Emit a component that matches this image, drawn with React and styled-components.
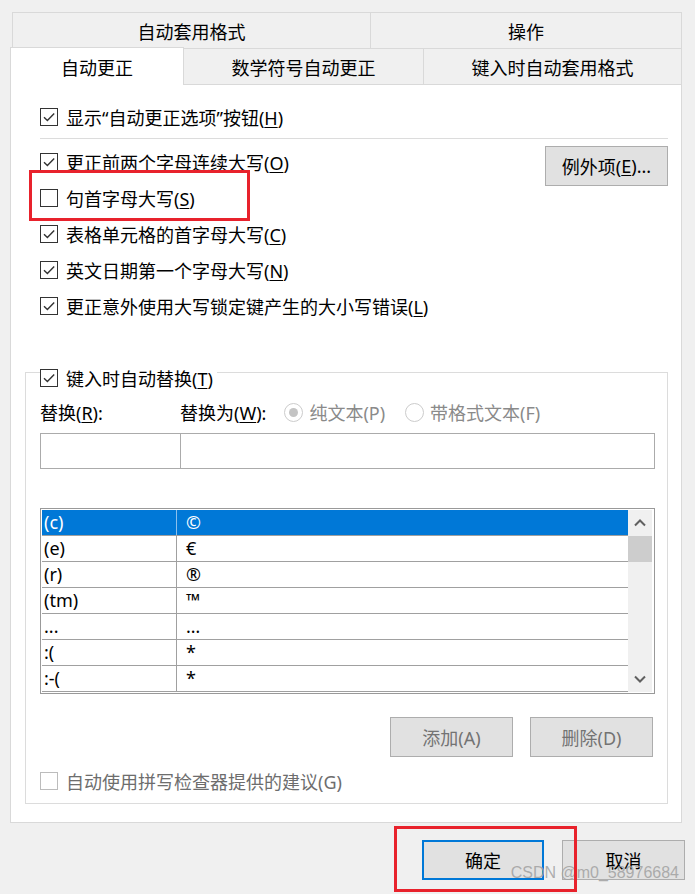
import React from 'react'
import styled, { createGlobalStyle } from 'styled-components'

const GlobalStyle = createGlobalStyle`
  html, body {
    margin: 0;
    padding: 0;
    background: #f0f0f0;
  }
  body {
    font-family: "Noto Sans", "Noto Sans CJK SC", sans-serif;
    font-size: 18px;
    color: #000;
  }
  * { box-sizing: border-box; }
`

const Page = styled.div`
  position: relative;
  width: 695px;
  height: 894px;
  overflow: hidden;
  padding: 12px 0 0 10px;
`

const Dialog = styled.div`
  width: 672px;
`

const TabRow = styled.div`
  display: flex;
  height: 36px;
  padding-left: ${p => p.$indent || 0}px;
`

const Tab = styled.div`
  position: relative;
  z-index: ${p => p.$active ? 2 : 0};
  width: ${p => p.$w}px;
  height: ${p => p.$active ? 38 : 36}px;
  margin-top: ${p => p.$active ? -1 : 0}px;
  background: ${p => p.$active ? '#fff' : '#f0f0f0'};
  border: 1px solid #d9d9d9;
  border-bottom: none;
  display: flex;
  align-items: center;
  justify-content: center;
  padding-top: 3px;
  line-height: 1;
  & + & { margin-left: -1px; }
`

const Panel = styled.div`
  position: relative;
  background: #fff;
  border: 1px solid #d9d9d9;
  height: 739px;
  padding: 14px 13px 0 14px;
`

const Section = styled.div`
  padding-left: 15px;
`

const OptionRow = styled.div`
  position: relative;
  display: flex;
  align-items: center;
  gap: 8px;
  height: ${p => p.$h || 36}px;
  margin-top: ${p => p.$mt || 0}px;
  color: ${p => p.$disabled ? '#6d6d6d' : '#000'};
  white-space: nowrap;
`

const Box = styled.span`
  flex: none;
  width: 18px;
  height: 18px;
  border: 1px solid ${p => p.$disabled ? '#bcbcbc' : '#333'};
  background: #fff;
  display: flex;
  align-items: center;
  justify-content: center;
`

const Mn = styled.span`
  text-decoration: underline;
  text-underline-offset: 2px;
  text-decoration-thickness: 1px;
`

const Divider = styled.div`
  height: 1px;
  background: #dcdcdc;
  margin: 3px 0 5px;
`

const OptionsBlock = styled.div`
  display: flex;
  justify-content: space-between;
  align-items: flex-start;
`

const Button = styled.div`
  position: relative;
  flex: none;
  width: ${p => p.$w || 123}px;
  height: 40px;
  margin-top: ${p => p.$mt || 0}px;
  background: #e1e1e1;
  border: ${p => p.$default ? '2px solid #0078d7' : '1px solid #adadad'};
  color: ${p => p.$disabled ? '#737373' : '#000'};
  display: flex;
  align-items: center;
  justify-content: center;
  white-space: nowrap;
`

const Highlight = styled.div`
  position: absolute;
  z-index: 3;
  left: ${p => p.$l}px;
  top: ${p => p.$t}px;
  width: ${p => p.$w}px;
  height: ${p => p.$h}px;
  border: 3px solid #e8222c;
  pointer-events: none;
`

const GroupBox = styled.div`
  margin-top: 48px;
  border: 1px solid #dcdcdc;
  padding: 0 12px 10px 14px;
`

const Legend = styled.div`
  display: flex;
  width: fit-content;
  align-items: center;
  gap: 8px;
  height: 24px;
  margin-top: -7px;
  padding-right: 4px;
  background: #fff;
  white-space: nowrap;
`

const LabelRow = styled.div`
  display: flex;
  align-items: center;
  height: 24px;
  margin-top: 10px;
  white-space: nowrap;
`

const FieldLabel = styled.div`
  width: ${p => p.$w ? `${p.$w}px` : 'auto'};
`

const RadioGroup = styled.div`
  display: flex;
  align-items: center;
  margin-left: 18px;
  color: #8a8a8a;
`

const RadioItem = styled.div`
  display: flex;
  align-items: center;
  gap: 6px;
  & + & { margin-left: 20px; }
`

const Radio = styled.span`
  width: 19px;
  height: 19px;
  border-radius: 50%;
  border: 1px solid #cccccc;
  background: #fff;
  display: flex;
  align-items: center;
  justify-content: center;
  &::after {
    content: '';
    width: 9px;
    height: 9px;
    border-radius: 50%;
    background: ${p => p.$on ? '#c4c4c4' : 'transparent'};
  }
`

const InputRow = styled.div`
  display: flex;
  height: 36px;
  margin-top: 9px;
`

const Input = styled.div`
  width: ${p => p.$w ? `${p.$w}px` : 'auto'};
  flex: ${p => p.$w ? 'none' : 1};
  border: 1px solid #ababab;
  background: #fff;
  & + & { margin-left: -1px; }
`

const List = styled.div`
  display: flex;
  height: 186px;
  margin-top: 39px;
  border: 1px solid #999;
  padding: 1px 2px 1px 1px;
  background: #fff;
`

const Rows = styled.div`
  flex: 1;
  overflow: hidden;
`

const Row = styled.div`
  display: flex;
  height: 26px;
  border-bottom: 1px solid #a0a0a0;
  background: ${p => p.$sel ? '#0078d7' : '#fff'};
  color: ${p => p.$sel ? '#fff' : '#000'};
  line-height: 25px;
`

const KeyCell = styled.div`
  width: 135px;
  padding-left: 2px;
  border-right: 1px solid ${p => p.$sel ? '#8cc0ec' : '#a0a0a0'};
`

const ValueCell = styled.div`
  flex: 1;
  padding-left: 9px;
`

const Scrollbar = styled.div`
  width: 24px;
  background: #f0f0f0;
  display: flex;
  flex-direction: column;
`

const ArrowButton = styled.div`
  height: 26px;
  display: flex;
  align-items: center;
  justify-content: center;
  margin-top: ${p => p.$push ? 'auto' : 0};
`

const Thumb = styled.div`
  height: 26px;
  background: #cdcdcd;
`

const ButtonRow = styled.div`
  display: flex;
  justify-content: flex-end;
  gap: 17px;
  margin-top: 23px;
  padding-right: 2px;
`

const Footer = styled.div`
  display: flex;
  justify-content: flex-end;
  gap: 18px;
  width: 675px;
  margin-top: 17px;
`

const Watermark = styled.div`
  position: absolute;
  right: 16px;
  top: 864px;
  font-family: "Liberation Sans", Arial, sans-serif;
  font-size: 16px;
  color: rgba(160, 160, 160, 0.85);
  white-space: nowrap;
`

const Check = ({ disabled, checked = true }) => (
  <Box $disabled={disabled}>
    {checked && (
      <svg width="14" height="14" viewBox="0 0 14 14">
        <path d="M2 7.2 L5.4 10.6 L12.2 3.6" fill="none" stroke="#333" strokeWidth="1.4" />
      </svg>
    )}
  </Box>
)

const Chevron = ({ down }) => (
  <svg width="12" height="8" viewBox="0 0 12 8">
    <path d={down ? 'M1 1.5 L6 6.5 L11 1.5' : 'M1 6.5 L6 1.5 L11 6.5'} fill="none" stroke="#606060" strokeWidth="2" />
  </svg>
)

const options = [
  { text: '更正前两个字母连续大写', key: 'O', checked: true },
  { text: '句首字母大写', key: 'S', checked: false, mark: true },
  { text: '表格单元格的首字母大写', key: 'C', checked: true },
  { text: '英文日期第一个字母大写', key: 'N', checked: true },
  { text: '更正意外使用大写锁定键产生的大小写错误', key: 'L', checked: true },
]

const entries = [
  ['(c)', '©'],
  ['(e)', '€'],
  ['(r)', '®'],
  ['(tm)', '™'],
  ['...', '…'],
  [':(', '*'],
  [':-(', '*'],
]

export default function App() {
  return (
    <Page>
      <GlobalStyle />
      <Dialog>
        <TabRow $indent={2}>
          <Tab $w={359}>自动套用格式</Tab>
          <Tab $w={312}>操作</Tab>
        </TabRow>
        <TabRow>
          <Tab $w={174} $active>自动更正</Tab>
          <Tab $w={241}>数学符号自动更正</Tab>
          <Tab $w={259}>键入时自动套用格式</Tab>
        </TabRow>
        <Panel>
          <Section>
            <OptionRow>
              <Check />
              <span>显示“自动更正选项”按钮(<Mn>H</Mn>)</span>
            </OptionRow>
            <Divider />
            <OptionsBlock>
              <div>
                {options.map(o => (
                  <OptionRow key={o.key}>
                    <Check checked={o.checked} />
                    <span>{o.text}(<Mn>{o.key}</Mn>)</span>
                    {o.mark && <Highlight $l={-11} $t={-10} $w={221} $h={51} />}
                  </OptionRow>
                ))}
              </div>
              <Button $mt={2}>例外项(<Mn>E</Mn>)...</Button>
            </OptionsBlock>
          </Section>

          <GroupBox>
            <Legend>
              <Check />
              <span>键入时自动替换(<Mn>T</Mn>)</span>
            </Legend>
            <LabelRow>
              <FieldLabel $w={140}>替换(<Mn>R</Mn>):</FieldLabel>
              <FieldLabel>替换为(<Mn>W</Mn>):</FieldLabel>
              <RadioGroup>
                <RadioItem><Radio $on />纯文本(P)</RadioItem>
                <RadioItem><Radio />带格式文本(F)</RadioItem>
              </RadioGroup>
            </LabelRow>
            <InputRow>
              <Input $w={141} />
              <Input />
            </InputRow>
            <List>
              <Rows>
                {entries.map(([k, v], i) => (
                  <Row key={k} $sel={i === 0}>
                    <KeyCell $sel={i === 0}>{k}</KeyCell>
                    <ValueCell>{v}</ValueCell>
                  </Row>
                ))}
              </Rows>
              <Scrollbar>
                <ArrowButton><Chevron /></ArrowButton>
                <Thumb />
                <ArrowButton $push><Chevron down /></ArrowButton>
              </Scrollbar>
            </List>
            <ButtonRow>
              <Button $disabled>添加(A)</Button>
              <Button $disabled>删除(D)</Button>
            </ButtonRow>
            <OptionRow $h={24} $mt={12} $disabled>
              <Check disabled checked={false} />
              <span>自动使用拼写检查器提供的建议(G)</span>
            </OptionRow>
          </GroupBox>
        </Panel>
      </Dialog>
      <Footer>
        <Button $w={122} $default>
          确定
          <Highlight $l={-30} $t={-16} $w={183} $h={66} />
        </Button>
        <Button>取消</Button>
      </Footer>
      <Watermark>CSDN @m0_58976684</Watermark>
    </Page>
  )
}
